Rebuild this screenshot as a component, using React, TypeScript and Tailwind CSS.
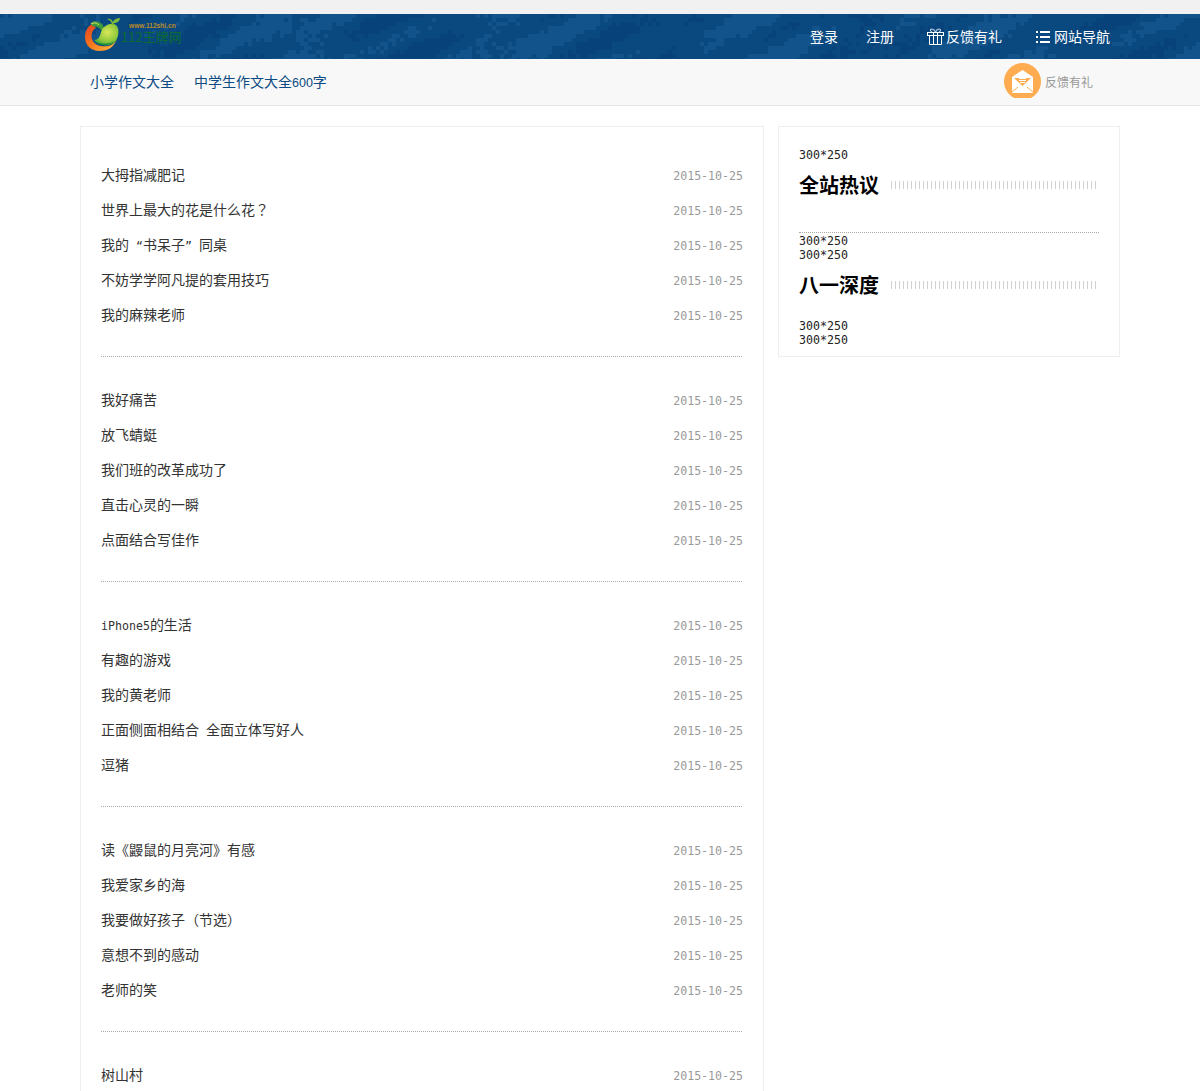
import React from 'react';

const groups: string[][] = [
  ['大拇指减肥记', '世界上最大的花是什么花？', '我的 “书呆子” 同桌', '不妨学学阿凡提的套用技巧', '我的麻辣老师'],
  ['我好痛苦', '放飞蜻蜓', '我们班的改革成功了', '直击心灵的一瞬', '点面结合写佳作'],
  ['iPhone5的生活', '有趣的游戏', '我的黄老师', '正面侧面相结合 全面立体写好人', '逗猪'],
  ['读《鼹鼠的月亮河》有感', '我爱家乡的海', '我要做好孩子（节选）', '意想不到的感动', '老师的笑'],
  ['树山村'],
];

// cloudy header texture, same blocks every render
const patches: { x: number; y: number; c: string }[] = [];
let seed = 7;
const rnd = () => {
  seed = (seed * 16807) % 2147483647;
  return seed / 2147483647;
};
for (let y = 0; y < 45; y += 4) {
  for (let x = 0; x < 1200; x += 4) {
    const v = Math.sin(x / 37) + Math.sin(x / 13 + y / 9) + Math.sin(y / 7 + x / 23) + rnd() * 1.4 - 0.7;
    if (v > 0.9) patches.push({ x, y, c: '#14568e' });
    else if (v < -1.4) patches.push({ x, y, c: '#064278' });
  }
}

const Title = ({ text }: { text: string }) => (
  <span className="-mt-[2px] pl-px font-['Noto_Sans_CJK_SC',sans-serif] text-[14px] text-[#333]">
    {text.split(/([\x00-\x7f“”]+|？)/).map((part, i) =>
      part === '？' ? (
        <span key={i} className="font-['Noto_Sans_CJK_TC',sans-serif]">{part}</span>
      ) : /^[\x00-\x7f“”]+$/.test(part) ? (
        <span key={i} className="font-['DejaVu_Sans_Mono',monospace] text-[11.6px] whitespace-pre">{part}</span>
      ) : (
        part
      ),
    )}
  </span>
);

const Size = () => (
  <div className="h-[14px] font-['DejaVu_Sans_Mono',monospace] text-[11.6px] leading-[14px] text-[#222]">300*250</div>
);

const SideTitle = ({ text }: { text: string }) => (
  <div className="mt-2 flex h-[30px] w-[300px] items-center">
    <span className="font-['Noto_Sans_CJK_SC',sans-serif] text-[20px] leading-[30px] font-bold text-black">{text}</span>
    <span className="ml-3 h-2 w-[207px] bg-[repeating-linear-gradient(90deg,#d0d0d0_0,#d0d0d0_1px,transparent_1px,transparent_4px)]" />
  </div>
);

const Logo = () => (
  <div className="ml-[5px] flex h-[45px] items-start">
    <svg width="37" height="37" viewBox="0 0 37 37" className="mt-[2px]">
      <defs>
        <linearGradient id="swoosh" x1="0" y1="0" x2="0.8" y2="1">
          <stop offset="0" stopColor="#e2401f" />
          <stop offset="0.55" stopColor="#f5751d" />
          <stop offset="1" stopColor="#fbb03a" />
        </linearGradient>
        <radialGradient id="mango" cx="0.55" cy="0.4" r="0.7">
          <stop offset="0" stopColor="#d8e85a" />
          <stop offset="0.6" stopColor="#8fc83c" />
          <stop offset="1" stopColor="#2f9a3a" />
        </radialGradient>
      </defs>
      <path d="M7 8C2 11 0 16 0 21C0 30 7 35 14 35C22 35 28 32 31 25C27 30 21 31 16 30C9 29 5 23 7 17C8 14 9 13 11 12Z" fill="url(#swoosh)" />
      <path d="M6 7C9 4 14 5 17 8C19 10 19 13 20 15L16 14C14 11 11 10 7 10Z" fill="#3f9c3c" />
      <path d="M6 8C9 6 12 7 14 9" stroke="#e9e36a" strokeWidth="1" fill="none" />
      <path d="M31 25C26 31 14 31 9 24C14 24 15 20 16 16C18 10 24 7 29 8C34 9 35 18 31 25Z" fill="url(#mango)" />
      <path d="M10 25C15 31 25 30 30 25C25 28 16 29 10 25Z" fill="#138a3c" />
      <path d="M27 9C27 6 25 4 22 3C24 2 27 3 28 6C29 3 32 2 35 2C35 5 32 7 29 7L28 9Z" fill="#7cb83a" />
    </svg>
    <div className="-ml-px flex flex-col">
      <span className="mt-[8px] ml-[8px] text-[6.6px] leading-[7px] font-bold font-['Liberation_Sans',sans-serif] text-[#b98a28]">www.112shi.cn</span>
      <span className="font-['Noto_Sans_CJK_SC',sans-serif] text-[13px] leading-[16px] text-[#0b6b33]">112王牌网</span>
    </div>
  </div>
);

const GiftIcon = () => (
  <svg width="17" height="17" viewBox="0 0 17 17" className="mr-[2px]">
    <path d="M5 4C3 3 3 1 5 1C7 1 8 3 8.5 4C9 3 10 1 12 1C14 1 14 3 12 4" stroke="#b9cde0" strokeWidth="1.2" fill="none" />
    <rect x="0.5" y="4.5" width="16" height="3" fill="none" stroke="white" />
    <path d="M2.5 8V16.5H14.5V8M6.5 5V16M10.5 5V16" stroke="white" fill="none" />
  </svg>
);

const ListIcon = () => (
  <svg width="14" height="13" viewBox="0 0 14 13" className="mr-[4px]">
    <path d="M0 1h2v2H0zM0 6h2v2H0zM0 11h2v2H0zM4 1h10v2H4zM4 6h10v2H4zM4 11h10v2H4z" fill="white" />
  </svg>
);

const MailIcon = () => (
  <div className="h-[35px] w-[37px] overflow-hidden">
    <svg width="37" height="37" viewBox="0 0 37 37">
      <circle cx="18.5" cy="18.5" r="18.5" fill="#ffab4f" />
      <path d="M8 14L18.5 7L29 14V30H8Z" fill="white" />
      <path d="M10 15H27L18.5 23Z" fill="#ffab4f" />
      <path d="M15 15.5H22M15 17.5H22M16 19.5H21" stroke="white" />
      <path d="M8 29L14 24M29 29L23 24" stroke="#ffab4f" />
    </svg>
  </div>
);

export default function App() {
  return (
    <div className="h-[1091px] overflow-hidden bg-white">
      <div className="h-[14px] bg-[#f1f1f1]" />
      <header className="relative h-[45px] overflow-hidden bg-[#0a4880]">
        <svg width="1200" height="45" className="absolute inset-0">
          {patches.map((p, i) => (
            <rect key={i} x={p.x} y={p.y} width="4" height="4" fill={p.c} opacity="0.8" />
          ))}
        </svg>
        <div className="relative mx-auto flex h-[45px] w-[1040px] items-start justify-between pr-[10px]">
          <Logo />
          <nav className="flex h-[45px] items-center pb-[1px] font-['Noto_Sans_CJK_SC',sans-serif] text-[14px] text-white">
            <a>登录</a>
            <a className="ml-[28px]">注册</a>
            <a className="ml-[33px] flex items-center"><GiftIcon />反馈有礼</a>
            <a className="ml-[34px] flex items-center"><ListIcon />网站导航</a>
          </nav>
        </div>
      </header>
      <div className="h-[47px] border-b border-[#e3e3e3] bg-[#f8f8f8]">
        <div className="mx-auto flex h-[46px] w-[1040px] items-center justify-between pr-[27px] pl-[10px]">
          <div className="flex gap-5 font-['Noto_Sans_CJK_SC',sans-serif] text-[14px] text-[#0b4a82]">
            <a>小学作文大全</a>
            <a>
              中学生作文大全<span className="font-['Liberation_Sans',sans-serif] text-[12.5px]">600</span>字
            </a>
          </div>
          <a className="mb-[4px] flex h-[35px] items-start font-['Noto_Sans_CJK_SC',sans-serif] text-[12px] text-[#999]">
            <MailIcon />
            <span className="mt-[10px] ml-[4px] leading-[18px]">反馈有礼</span>
          </a>
        </div>
      </div>
      <main className="mx-auto mt-5 flex w-[1040px] items-start justify-between">
        <section className="min-h-[1000px] w-[684px] border border-[#eee] pt-[31px] pr-[20px] pl-[19px]">
          {groups.map((rows, i) => (
            <div key={i} className={i < groups.length - 1 ? 'mb-[26px]' : ''}>
              <ul>
                {rows.map((row, j) => (
                  <li key={j} className="flex h-[35px] items-center justify-between">
                    <Title text={row} />
                    <span className="mt-[2px] font-['DejaVu_Sans_Mono',monospace] text-[11.6px] text-[#999]">2015-10-25</span>
                  </li>
                ))}
              </ul>
              {i < groups.length - 1 && <div className="mx-px mt-[23px] border-b border-dotted border-[#aaa]" />}
            </div>
          ))}
        </section>
        <aside className="h-[231px] w-[342px] border border-[#eee] pt-[21px] pl-5">
          <Size />
          <SideTitle text="全站热议" />
          <div className="mb-px w-[300px] border-b border-dotted border-[#aaa] pt-[32px]" />
          <Size />
          <Size />
          <SideTitle text="八一深度" />
          <div className="mt-[19px]">
            <Size />
            <Size />
          </div>
        </aside>
      </main>
    </div>
  );
}
